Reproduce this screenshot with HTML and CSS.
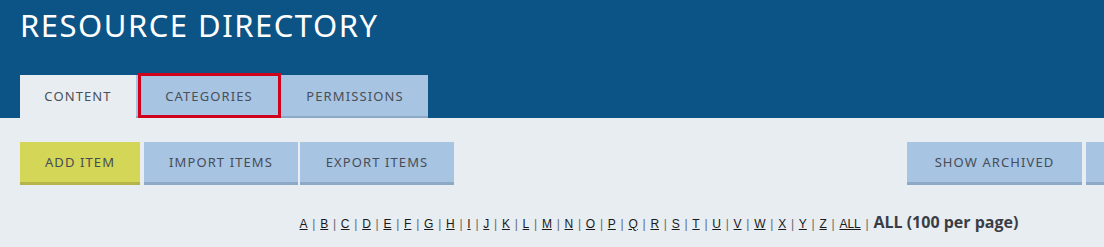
FILE: index.html
```html
<!DOCTYPE html>
<html>
<head>
<meta charset="utf-8">
<link rel="stylesheet" href="styles.css">
</head>
<body>
<div class="page">
  <header class="header">
    <h1 class="title">RESOURCE DIRECTORY</h1>
    <nav class="tabs">
      <a class="tab tab-active">CONTENT</a>
      <a class="tab tab-highlight">CATEGORIES</a>
      <a class="tab tab-perm">PERMISSIONS</a>
    </nav>
  </header>
  <main class="content">
    <div class="toolbar">
      <div class="btn-group">
        <a class="btn btn-add">ADD ITEM</a>
        <a class="btn btn-import">IMPORT ITEMS</a>
        <a class="btn btn-export">EXPORT ITEMS</a>
      </div>
      <div class="btn-group">
        <a class="btn btn-archived">SHOW ARCHIVED</a>
        <a class="btn btn-more">&nbsp;</a>
      </div>
    </div>
    <div class="alpha">
      <a>A</a><span class="sep">|</span><a>B</a><span class="sep">|</span><a>C</a><span class="sep">|</span><a>D</a><span class="sep">|</span><a>E</a><span class="sep">|</span><a>F</a><span class="sep">|</span><a>G</a><span class="sep">|</span><a>H</a><span class="sep">|</span><a>I</a><span class="sep">|</span><a>J</a><span class="sep">|</span><a>K</a><span class="sep">|</span><a>L</a><span class="sep">|</span><a>M</a><span class="sep">|</span><a>N</a><span class="sep">|</span><a>O</a><span class="sep">|</span><a>P</a><span class="sep">|</span><a>Q</a><span class="sep">|</span><a>R</a><span class="sep">|</span><a>S</a><span class="sep">|</span><a>T</a><span class="sep">|</span><a>U</a><span class="sep">|</span><a>V</a><span class="sep">|</span><a>W</a><span class="sep">|</span><a>X</a><span class="sep">|</span><a>Y</a><span class="sep">|</span><a>Z</a><span class="sep">|</span><a>ALL</a><span class="sep">|</span><strong class="current">ALL (100 per page)</strong>
    </div>
  </main>
</div>
</body>
</html>
```
FILE: styles.css
```css
html, body {
  margin: 0;
  padding: 0;
  background: #e8edf2;
}
.page {
  width: 1104px;
  height: 247px;
  overflow: hidden;
  font-family: "Noto Sans", "Open Sans", sans-serif;
}
.header {
  background: #0c5486;
  height: 118px;
  padding-left: 20px;
  display: flex;
  flex-direction: column;
  box-sizing: border-box;
}
.title {
  margin: 5px 0 0 0;
  font-size: 31px;
  line-height: 40px;
  font-weight: 400;
  color: #ffffff;
  letter-spacing: 1.5px;
}
.tabs {
  margin-top: auto;
  display: flex;
  height: 43px;
}
.tab {
  display: flex;
  align-items: center;
  justify-content: center;
  box-sizing: border-box;
  height: 43px;
  font-size: 13px;
  letter-spacing: 1.1px;
  color: #4a4f58;
  background: #a7c4e3;
  border-bottom: 2px solid #8ea9c6;
}
.tab-active {
  width: 116px;
  background: #e8edf2;
  border-bottom-color: #e8edf2;
}
.tab-highlight {
  width: 146px;
  position: relative;
}
.tab-highlight::after {
  content: "";
  position: absolute;
  top: -2px;
  bottom: -2px;
  left: 2px;
  right: 1px;
  border: 3px solid #d0021b;
}
.tab-perm {
  width: 146px;
}
.content {
  width: 1298px;
  padding: 24px 0 0 20px;
  box-sizing: border-box;
}
.toolbar {
  display: flex;
  justify-content: space-between;
}
.btn-group {
  display: flex;
  gap: 3px;
}
.btn {
  display: flex;
  align-items: center;
  justify-content: center;
  box-sizing: border-box;
  height: 43px;
  padding-bottom: 1px;
  font-size: 13px;
  letter-spacing: 1.1px;
  color: #474c55;
  background: #a7c4e3;
  border-bottom: 3px solid #8ea9c6;
}
.btn-add {
  width: 120px;
  background: #d4d657;
  border-bottom-color: #b5b54b;
  margin-right: 1px;
}
.btn-import { width: 154px; }
.btn-export { width: 154px; margin-left: -1px; }
.btn-archived { width: 175px; }
.btn-more { width: 212px; margin-left: 1px; }
.alpha {
  margin-top: 28px;
  text-align: center;
  font-family: "Liberation Sans", Arial, sans-serif;
  font-size: 12px;
  color: #222;
  line-height: 18px;
}
.alpha a {
  text-decoration: underline;
  color: #1a1a1a;
}
.sep {
  color: #666a70;
  margin: 0 4.75px;
}
.current {
  font-family: "Open Sans", "Lato", sans-serif;
  font-weight: 700;
  font-size: 16px;
  color: #3a3d44;
}
```
